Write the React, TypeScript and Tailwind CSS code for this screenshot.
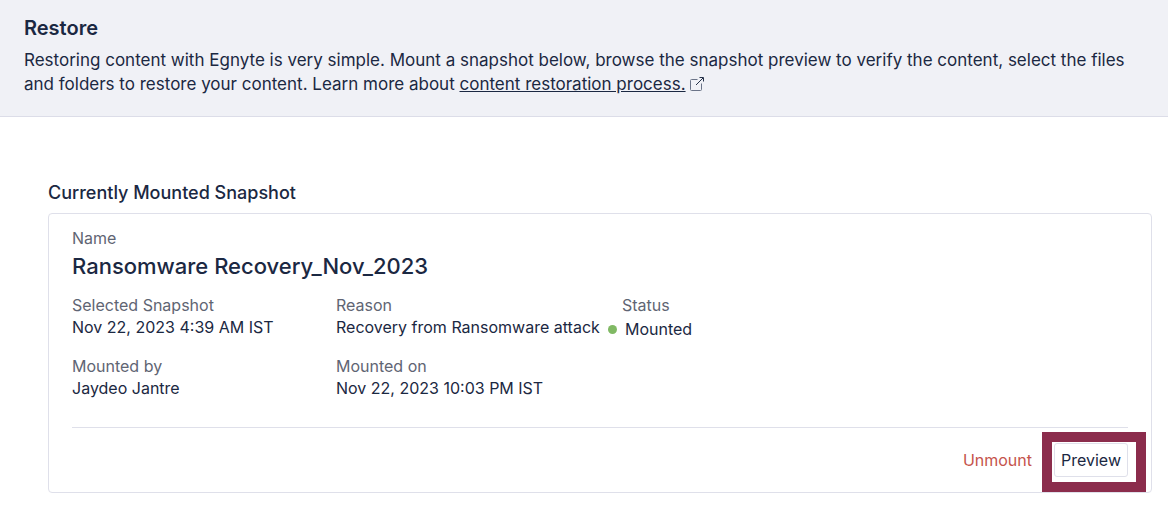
import React from 'react';

type FieldProps = {
  label: string;
  value: string;
};

function Field({ label, value }: FieldProps) {
  return (
    <div>
      <dt className="text-[#5f6573]">{label}</dt>
      <dd>{value}</dd>
    </div>
  );
}

function ExternalIcon() {
  return (
    <svg
      className="ml-1 inline-block h-[14px] w-[14px] align-[-1px]"
      viewBox="0 0 14 14"
      fill="none"
      stroke="#6b7488"
      aria-hidden="true"
    >
      <path d="M7.5 2.5H1.5A1 1 0 0 0 .5 3.5V12.5A1 1 0 0 0 1.5 13.5H10.5A1 1 0 0 0 11.5 12.5V6.5" />
      <path d="M6 8L13 1" stroke="#26324a" />
      <path d="M9.5 .5H13.5V4.5" stroke="#26324a" />
    </svg>
  );
}

export default function App() {
  return (
    <div className="min-h-screen bg-white font-['Inter',sans-serif] text-[#1b2842]">
      <header className="border-b border-[#dcdde8] bg-[#f0f1f6] px-6 pt-4 pb-5">
        <h1 className="mb-2 text-[20px] leading-6 font-semibold">Restore</h1>
        <p className="text-[17px] leading-6">
          Restoring content with Egnyte is very simple. Mount a snapshot below, browse the snapshot preview to verify the
          content, select the files and folders to restore your content. Learn more about{' '}
          <a href="#restoration" className="inline-block underline">
            content restoration process.
          </a>
          <ExternalIcon />
        </p>
      </header>

      <main className="px-4 pt-16">
        <h2 className="mb-2 ml-8 text-[18px] leading-6 font-medium">Currently Mounted Snapshot</h2>

        <section className="ml-8 rounded border border-[#dfe0ea] px-[23px] pt-3">
          <p className="text-[16px] leading-6 text-[#5f6573]">Name</p>
          <h3 className="mb-3 text-[22px] leading-8 font-medium">Ransomware Recovery_Nov_2023</h3>

          <dl className="grid grid-cols-[264px_272px_1fr] gap-y-[15px] text-[16px] leading-[22px]">
            <Field label="Selected Snapshot" value="Nov 22, 2023 4:39 AM IST" />
            <Field label="Reason" value="Recovery from Ransomware attack" />
            <div>
              <dt className="pl-[14px] text-[#5f6573]">Status</dt>
              <dd className="flex items-center gap-2 pt-0.5">
                <span className="h-[9px] w-[9px] rounded-full bg-[#80b964]" />
                Mounted
              </dd>
            </div>
            <Field label="Mounted by" value="Jaydeo Jantre" />
            <Field label="Mounted on" value="Nov 22, 2023 10:03 PM IST" />
          </dl>

          <div className="mt-7 flex items-center justify-end gap-[22px] border-t border-[#dfe0ea] py-[15px] text-[16px] leading-6">
            <button type="button" className="text-[#c5534c]">
              Unmount
            </button>
            <div className="relative">
              <button type="button" className="block rounded-[3px] border border-[#dfe0ea] bg-white px-1.5 py-1">
                Preview
              </button>
              <div className="pointer-events-none absolute -top-[11px] -right-[18px] -bottom-[15px] -left-3 border-[10px] border-[#8b2c4c]" />
            </div>
          </div>
        </section>
      </main>
    </div>
  );
}
